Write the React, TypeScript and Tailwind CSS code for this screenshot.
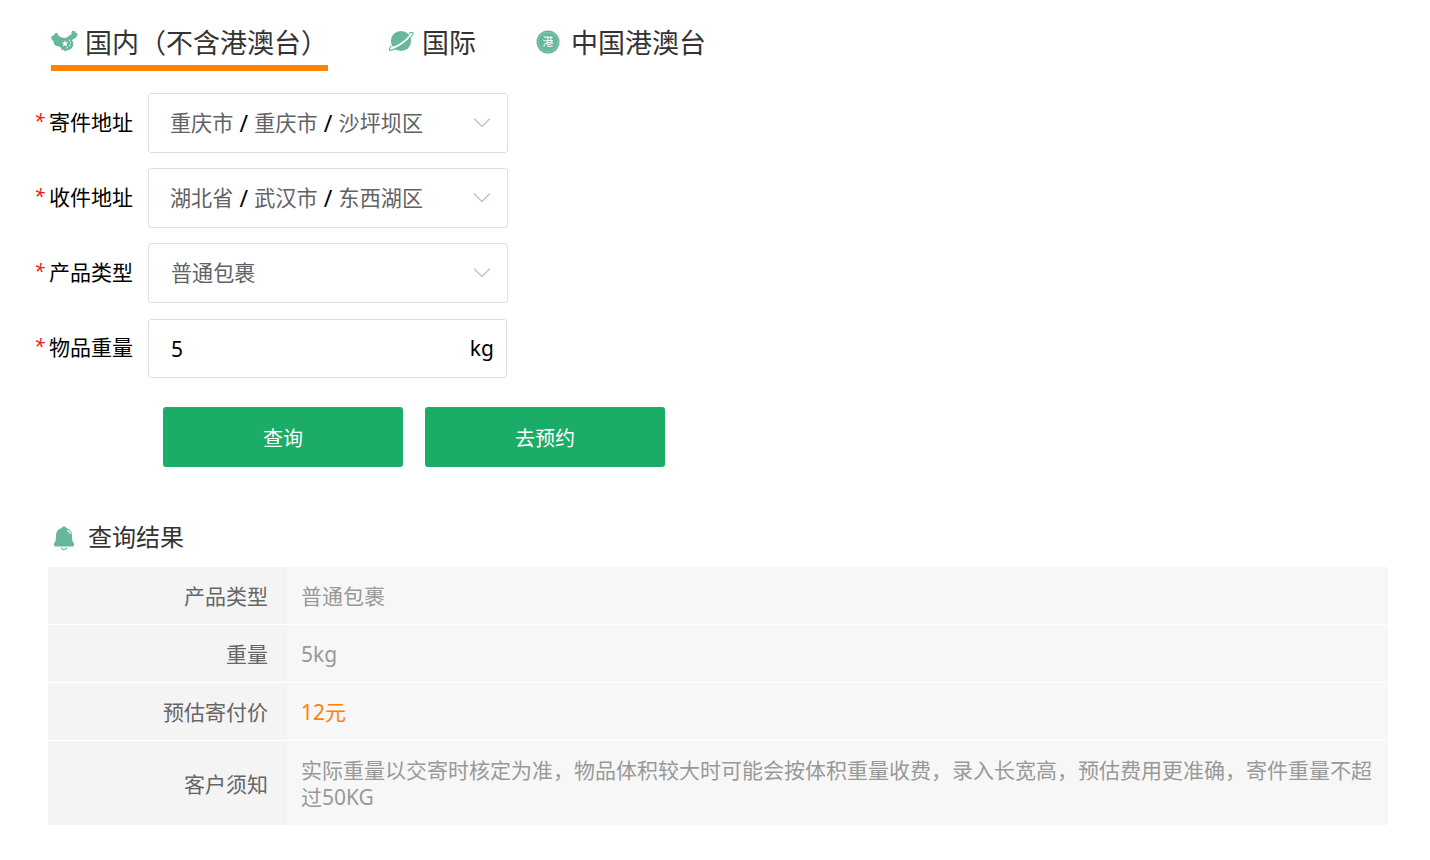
import React, { useState } from 'react';

const ChinaIcon = () => (
  <svg width="27" height="23" viewBox="0 0 27 23" className="shrink-0">
    <path
      d="M0.4 6 L2.6 5.4 L4.8 2.7 L6.4 3.2 L7.6 5.8 L10.6 7.6 L14 7.9 L17 6.8 L18.4 5.2 L20.6 4.2 L20.4 2 L21.8 0.8 L24 1.2 L25 3 L26.6 3.4 L26 6.3 L24.4 8 L21.8 9.4 L20.8 10.6 L22.4 12.2 L22.1 15.5 L20.8 18.2 L17.8 20 L15.4 20.6 L14.4 21.4 L12.6 20 L10.6 19.8 L9.6 17.4 L8.2 16.4 L5.2 16 L2.6 13.6 L2.8 11.6 L0.5 9.4 Z"
      fill="#68b69d"
    />
    <path
      d="M14 10.2 L14.9 12.4 L17.2 12.6 L15.5 14.1 L16 16.4 L14 15.2 L12 16.4 L12.5 14.1 L10.8 12.6 L13.1 12.4 Z"
      fill="#fff"
    />
    <path d="M18.2 9.8 L19 10.8 M19.4 12.2 L19.4 13.6 M19 15.2 L18.2 16.4 M16.8 17.4 L15.6 18" stroke="#fff" strokeWidth="1.1" />
  </svg>
);

const PlanetIcon = () => (
  <svg width="27" height="23" viewBox="0 0 27 23" className="shrink-0">
    <circle cx="13" cy="11" r="10.1" fill="#68b69d" />
    <path d="M3.4 15.8 C1 18.6 0.8 20.3 2.4 20.3 C5.6 20.3 12 16.4 16.8 12.6 C21.8 8.6 25.8 4 24.8 2.8 C24.2 2.1 22.8 2.5 21 3.4" fill="none" stroke="#68b69d" strokeWidth="1.3" />
    <path d="M3.6 17.8 C8.4 17.2 18.2 11.2 23 4.4" fill="none" stroke="#fff" strokeWidth="1.8" strokeLinecap="round" />
  </svg>
);

const GangIcon = () => (
  <svg width="24" height="24" viewBox="0 0 24 24" className="shrink-0">
    <circle cx="12" cy="12" r="11.5" fill="#68b69d" />
    <circle cx="12" cy="12" r="9.8" fill="none" stroke="#9accbb" strokeWidth="0.7" />
    <text x="12" y="16" textAnchor="middle" fontSize="11" fill="#fff">港</text>
  </svg>
);

const BellIcon = () => (
  <svg width="22" height="25" viewBox="0 0 22 25" className="shrink-0">
    <path
      d="M11 0.6 C12.2 0.6 13 1.2 13.3 2.1 C16.8 3 18.9 5.9 19 9.6 C19.1 14 19.3 15.2 20.7 17.1 C21.6 18.4 21.4 20.1 19.9 20.4 L2.1 20.4 C0.6 20.1 0.4 18.4 1.3 17.1 C2.7 15.2 2.9 14 3 9.6 C3.1 5.9 5.2 3 8.7 2.1 C9 1.2 9.8 0.6 11 0.6 Z"
      fill="#68b69d"
    />
    <path d="M14.4 4.4 C15.8 5 16.6 6 17 7.4" fill="none" stroke="#e6f4ef" strokeWidth="1.3" strokeLinecap="round" />
    <path d="M8.6 21.8 C9.1 24.4 12.9 24.4 13.4 21.8" fill="none" stroke="#68b69d" strokeWidth="1.2" strokeLinecap="round" />
  </svg>
);

const Chevron = () => (
  <svg width="18" height="10" viewBox="0 0 18 10" fill="none" stroke="#c0c4cc" strokeWidth="1.5" strokeLinecap="round" strokeLinejoin="round">
    <path d="M1.5 1 L9 8.5 L16.5 1" />
  </svg>
);

const tabs = [
  { key: 'domestic', label: '国内（不含港澳台）', icon: <ChinaIcon />, gap: 'gap-[7px]' },
  { key: 'intl', label: '国际', icon: <PlanetIcon />, gap: 'gap-[7px]' },
  { key: 'hmt', label: '中国港澳台', icon: <GangIcon />, gap: 'gap-[11px]' },
];

const addresses = [
  { label: '寄件地址', parts: ['重庆市', '重庆市', '沙坪坝区'] },
  { label: '收件地址', parts: ['湖北省', '武汉市', '东西湖区'] },
];

const results = [
  { label: '产品类型', value: '普通包裹' },
  { label: '重量', value: '5kg' },
  { label: '预估寄付价', value: '12元', highlight: true },
  {
    label: '客户须知',
    value: '实际重量以交寄时核定为准，物品体积较大时可能会按体积重量收费，录入长宽高，预估费用更准确，寄件重量不超过50KG',
  },
];

const FormRow = ({ label, children }: { label: string; children: React.ReactNode }) => (
  <div className="flex h-[60px]">
    <label className="flex w-[113px] items-center pb-px text-[21px] leading-none text-black">
      <span className="mr-[6px] -ml-px w-[9px] pb-[2px] text-[19px] italic text-[#f01414]">*</span>
      {label}
    </label>
    {children}
  </div>
);

export default function App() {
  const [activeTab, setActiveTab] = useState('domestic');
  const [weight, setWeight] = useState('5');

  return (
    <div className="h-[860px] w-[1430px] overflow-hidden bg-white font-['Noto_Sans','Noto_Sans_CJK_SC',sans-serif]">
      <div className="flex h-[71px] gap-[60px] pl-[51px] pt-[18px]">
        {tabs.map((tab) => (
          <button
            key={tab.key}
            onClick={() => setActiveTab(tab.key)}
            className={`flex h-[53px] items-center border-b-[6px] text-[27px] leading-none whitespace-nowrap text-[#333] ${tab.gap} ${
              activeTab === tab.key ? 'border-[#ff8200]' : 'border-transparent'
            }`}
          >
            {tab.icon}
            <span className="pt-[2px]">{tab.label}</span>
          </button>
        ))}
      </div>

      <div className="mt-[22px] flex flex-col gap-[15px] pl-[35px]">
        {addresses.map((row) => (
          <FormRow key={row.label} label={row.label}>
            <div className="flex w-[360px] items-center justify-between rounded-[3px] border border-[#dcdfe6] pr-4 pl-[21px] text-[21.1px] leading-none text-[#606266]">
              <div className="flex items-center">
                {row.parts.map((part, i) => (
                  <React.Fragment key={i}>
                    {i > 0 && <span className="w-[21px] text-center text-[23px] text-black">/</span>}
                    <span>{part}</span>
                  </React.Fragment>
                ))}
              </div>
              <Chevron />
            </div>
          </FormRow>
        ))}
        <FormRow label="产品类型">
          <div className="flex w-[360px] items-center justify-between rounded-[3px] border border-[#dcdfe6] pr-4 pl-[22px] text-[21.1px] leading-none text-[#606266]">
            <span>普通包裹</span>
            <Chevron />
          </div>
        </FormRow>
        <FormRow label="物品重量">
          <div className="mt-px flex h-[59px] w-[359px] items-center rounded-[3px] border border-[#dcdfe6] pr-3 pl-[22px] text-[21px] leading-none text-black">
            <input
              value={weight}
              onChange={(e) => setWeight(e.target.value)}
              className="h-full min-w-0 flex-1 outline-none"
            />
            <span>kg</span>
          </div>
        </FormRow>
      </div>

      <div className="mt-[29px] flex gap-[22px] pl-[163px] text-[20px] text-white">
        <button className="h-[60px] w-[240px] rounded-[3px] bg-[#1bac67] pt-[3px]">查询</button>
        <button className="h-[60px] w-[240px] rounded-[3px] bg-[#1bac67] pt-[3px]">去预约</button>
      </div>

      <div className="mt-[55px] flex h-[45px] items-start gap-[13px] pl-[53px]">
        <div className="pt-1">
          <BellIcon />
        </div>
        <h2 className="text-[24px] leading-[30px] text-[#333]">查询结果</h2>
      </div>

      <div className="ml-12 flex w-[1340px] flex-col gap-px text-[21px]">
        {results.map((row) => (
          <div key={row.label} className="flex leading-[27px]">
            <div className="flex w-[239px] items-center justify-end bg-[#f4f4f4] pt-[2px] pr-[19px] text-[#666]">{row.label}</div>
            <div
              className={`flex flex-1 items-center bg-[#f7f7f7] px-[14px] pt-4 pb-[14px] ${
                row.highlight ? 'text-[#ff8200]' : 'text-[#999]'
              }`}
            >
              {row.value}
            </div>
          </div>
        ))}
      </div>
    </div>
  );
}
